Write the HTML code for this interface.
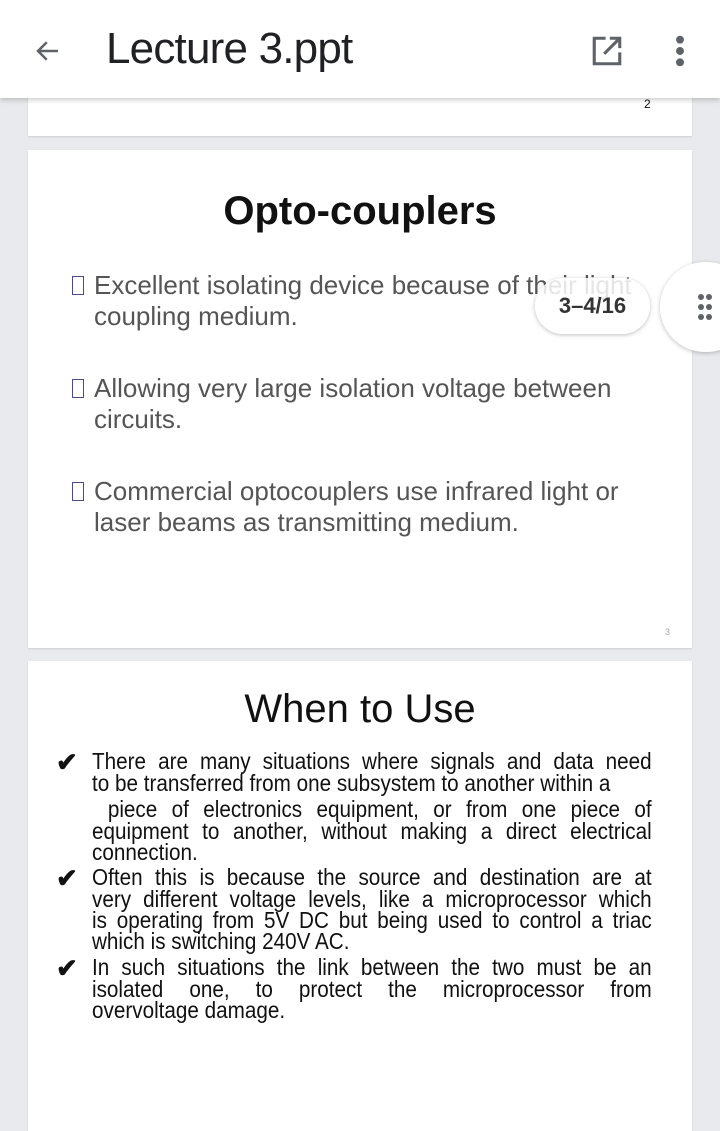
<!DOCTYPE html>
<html><head><style>
body{margin:0;width:720px;height:1120px;background:#e8eaed;position:relative;overflow:hidden;font-family:"Liberation Sans",sans-serif;}
.hdr{position:absolute;left:0;top:0;width:720px;height:98px;background:#fff;box-shadow:0 2px 5px rgba(0,0,0,.2);z-index:5}
.slide{position:absolute;left:28px;width:664px;background:#fff;box-shadow:0 1px 2px rgba(0,0,0,.12)}
.a{position:absolute;white-space:nowrap}
.b{position:absolute;left:94px;font-size:26px;color:#555;line-height:31px;white-space:nowrap}
.sq{position:absolute;left:72px;width:10px;height:17px;border:1.5px solid #4a4a8a}
.l{position:absolute;left:92px;width:636px;font-size:23.5px;color:#111;text-align:justify;text-align-last:justify;line-height:22px;white-space:nowrap;transform:scaleX(0.88);transform-origin:0 0}
.ck{position:absolute;left:56px;font-size:26px;color:#111;font-weight:bold}
</style></head><body>
<div class="hdr">
<svg class="a" style="left:33px;top:36px" width="30" height="30" viewBox="0 0 24 24"><path d="M20 12H5M11 5l-7 7 7 7" fill="none" stroke="#5f6368" stroke-width="2"/></svg>
<div class="a" style="left:106px;top:24px;font-size:44px;color:#202124;letter-spacing:-0.8px">Lecture 3.ppt</div>
<svg class="a" style="left:590px;top:34px" width="34" height="34" viewBox="0 0 24 24"><path d="M11 3H3v18h18v-8M14 3h7v7M21 3L10 14" fill="none" stroke="#5f6368" stroke-width="2.2"/></svg>
<svg class="a" style="left:670px;top:34px" width="20" height="34" viewBox="0 0 8 24"><circle cx="4" cy="4" r="2.8" fill="#5f6368"/><circle cx="4" cy="12" r="2.8" fill="#5f6368"/><circle cx="4" cy="20" r="2.8" fill="#5f6368"/></svg>
</div>
<div class="slide" style="top:90px;height:46px"><div class="a" style="left:616px;top:7px;font-size:12px;color:#111">2</div></div>
<div class="slide" style="top:150px;height:498px">
<div class="a" style="left:0;width:664px;text-align:center;top:39px;font-size:40px;font-weight:bold;color:#111">Opto-couplers</div>
<div class="a" style="left:637px;top:477px;font-size:9px;color:#aaa">3</div>
</div>
<div class="sq" style="top:276px"></div><div class="b" style="top:270px">Excellent isolating device because of their light<br>coupling medium.</div>
<div class="sq" style="top:379px"></div><div class="b" style="top:373px">Allowing very large isolation voltage between<br>circuits.</div>
<div class="sq" style="top:482px"></div><div class="b" style="top:476px">Commercial optocouplers use infrared light or<br>laser beams as transmitting medium.</div>
<div class="a" style="left:535px;top:278px;width:115px;height:56px;border-radius:28px;background:rgba(255,255,255,.85);box-shadow:0 1px 4px rgba(0,0,0,.25);font-size:22px;font-weight:bold;color:#333;text-align:center;line-height:56px">3–4/16</div>
<div class="a" style="left:660px;top:262px;width:92px;height:90px;border-radius:46px;background:#fff;box-shadow:0 1px 4px rgba(0,0,0,.25)">
<svg style="position:absolute;left:37px;top:31px" width="16" height="28" viewBox="0 0 16 28"><g fill="#5f6368"><circle cx="4" cy="4" r="3"/><circle cx="12" cy="4" r="3"/><circle cx="4" cy="14" r="3"/><circle cx="12" cy="14" r="3"/><circle cx="4" cy="24" r="3"/><circle cx="12" cy="24" r="3"/></g></svg></div>
<div class="slide" style="top:661px;height:470px">
<div class="a" style="left:0;width:664px;text-align:center;top:26px;font-size:40px;color:#111">When to Use</div>
</div>
<div class="ck" style="top:747px">✔</div>
<div class="l" style="top:750px">There are many situations where signals and data need</div>
<div class="l" style="top:772px;text-align-last:left">to be transferred from one subsystem to another within a</div>
<div class="l" style="top:798px;padding-left:18px;width:618px">piece of electronics equipment, or from one piece of</div>
<div class="l" style="top:820px">equipment to another, without making a direct electrical</div>
<div class="l" style="top:841px;text-align-last:left">connection.</div>
<div class="ck" style="top:863px">✔</div>
<div class="l" style="top:866px">Often this is because the source and destination are at</div>
<div class="l" style="top:888px">very different voltage levels, like a microprocessor which</div>
<div class="l" style="top:909px">is operating from 5V DC but being used to control a triac</div>
<div class="l" style="top:930px;text-align-last:left">which is switching 240V AC.</div>
<div class="ck" style="top:953px">✔</div>
<div class="l" style="top:956px">In such situations the link between the two must be an</div>
<div class="l" style="top:978px">isolated one, to protect the microprocessor from</div>
<div class="l" style="top:999px;text-align-last:left">overvoltage damage.</div>
</body></html>
